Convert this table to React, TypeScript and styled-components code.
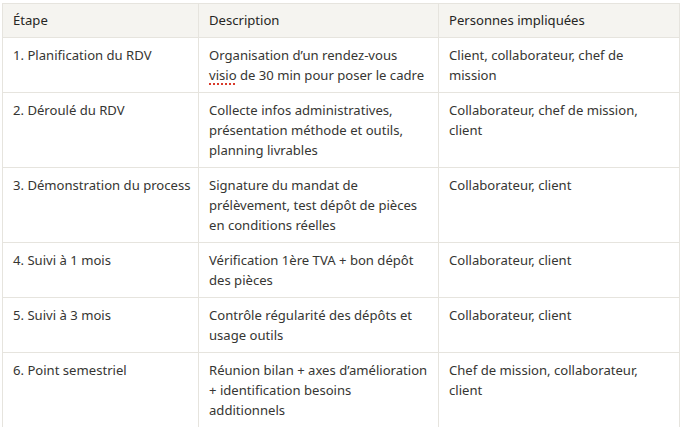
import React from "react";
import styled, { createGlobalStyle } from "styled-components";

const Global = createGlobalStyle`
  html, body { margin: 0; padding: 0; background: #ffffff; }
  body { font-family: "Noto Sans", "Open Sans", sans-serif; }
`;

const Page = styled.div`
  padding: 3px 0 0 2px;
`;

const Table = styled.table`
  width: 677px;
  border-collapse: collapse;
  table-layout: fixed;
  font-size: 13.1px;
  line-height: 20px;
  color: #363633;
`;

const Col = styled.col<{ $w: number }>`
  width: ${(p) => p.$w}px;
`;

const Th = styled.th`
  text-align: left;
  font-weight: 400;
  color: #262624;
  background: #f5f4f0;
  border: 1px solid #e6e4de;
  padding: 6px 10px 7px;
  vertical-align: top;
`;

const Td = styled.td`
  border: 1px solid #e6e4de;
  padding: 7px 10px;
  vertical-align: top;
`;

const Line = styled.span`
  display: block;
  white-space: nowrap;
`;

const Misspelled = styled.span`
  text-decoration: underline dotted #d93a2b;
  text-decoration-thickness: 2px;
  text-underline-offset: 3px;
`;

type Cell = React.ReactNode[];
type Row = { step: Cell; desc: Cell; people: Cell };

const rows: Row[] = [
  {
    step: ["1. Planification du RDV"],
    desc: [
      "Organisation d’un rendez-vous",
      <>
        <Misspelled>visio</Misspelled> de 30 min pour poser le cadre
      </>,
    ],
    people: ["Client, collaborateur, chef de", "mission"],
  },
  {
    step: ["2. Déroulé du RDV"],
    desc: ["Collecte infos administratives,", "présentation méthode et outils,", "planning livrables"],
    people: ["Collaborateur, chef de mission,", "client"],
  },
  {
    step: ["3. Démonstration du process"],
    desc: ["Signature du mandat de", "prélèvement, test dépôt de pièces", "en conditions réelles"],
    people: ["Collaborateur, client"],
  },
  {
    step: ["4. Suivi à 1 mois"],
    desc: ["Vérification 1ère TVA + bon dépôt", "des pièces"],
    people: ["Collaborateur, client"],
  },
  {
    step: ["5. Suivi à 3 mois"],
    desc: ["Contrôle régularité des dépôts et", "usage outils"],
    people: ["Collaborateur, client"],
  },
  {
    step: ["6. Point semestriel"],
    desc: ["Réunion bilan + axes d’amélioration", "+ identification besoins", "additionnels"],
    people: ["Chef de mission, collaborateur,", "client"],
  },
];

const renderCell = (lines: Cell) => lines.map((l, i) => <Line key={i}>{l}</Line>);

export default function App() {
  return (
    <>
      <Global />
      <Page>
        <Table>
          <colgroup>
            <Col $w={196} />
            <Col $w={240} />
            <Col $w={241} />
          </colgroup>
          <thead>
            <tr>
              <Th>Étape</Th>
              <Th>Description</Th>
              <Th>Personnes impliquées</Th>
            </tr>
          </thead>
          <tbody>
            {rows.map((r, i) => (
              <tr key={i}>
                <Td>{renderCell(r.step)}</Td>
                <Td>{renderCell(r.desc)}</Td>
                <Td>{renderCell(r.people)}</Td>
              </tr>
            ))}
          </tbody>
        </Table>
      </Page>
    </>
  );
}
